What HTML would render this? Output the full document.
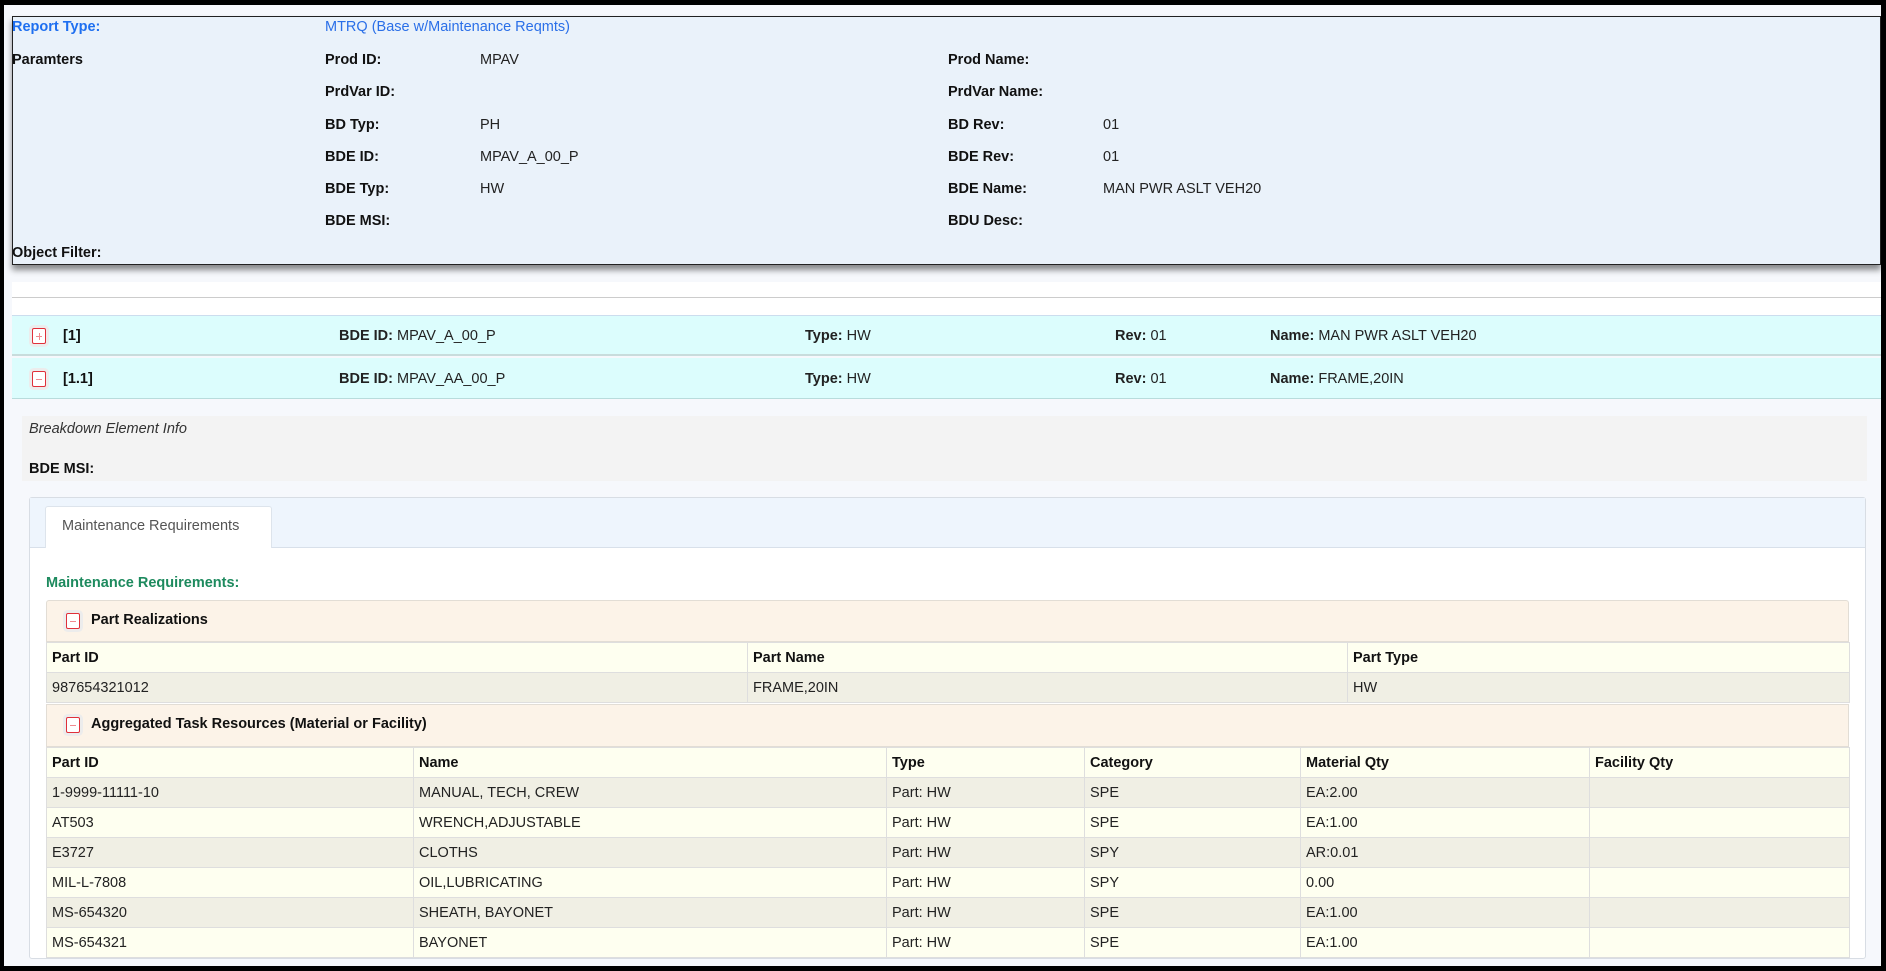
<!DOCTYPE html>
<html><head><meta charset="utf-8"><style>
*{box-sizing:border-box;margin:0;padding:0}
body{width:1886px;height:971px;background:#000;position:relative;overflow:hidden;font-family:"Liberation Sans",sans-serif;font-size:14.5px;color:#222}
.a{position:absolute;white-space:nowrap}
.b{font-weight:bold;color:#111}
#page{position:absolute;left:4px;top:5px;width:1877px;height:961px;background:#f6f8fc}
.ic{position:absolute;width:14px;height:16px;border:1px solid #e0303a;border-radius:2px;background:#fff;box-shadow:0 0 0 3px #ececec}
.ic:after{content:"";position:absolute;left:3px;top:7px;width:6px;height:1px;background:#f08a8f}
.ic.p:before{content:"";position:absolute;left:6px;top:4px;width:1px;height:7px;background:#f08a8f}
table{border-collapse:collapse;position:absolute;table-layout:fixed}
td,th{border:1px solid #dedede;height:30px;padding:0 5px;text-align:left;font-size:14.5px;white-space:nowrap}
th{background:#fefff0;font-weight:bold;color:#111}
tr.o td{background:#f0efe4}
tr.e td{background:#fefff0}
</style></head><body>
<div id="page"></div>
<div class="a" style="left:12px;top:16px;width:1869px;height:249px;background:#eaf2fa;border:1px solid #222;box-shadow:0 5px 6px rgba(0,0,0,.45)"></div>
<div class="a" style="left:12px;top:19px;font-weight:bold;color:#1e6ff0">Report Type:</div>
<div class="a" style="left:325px;top:19px;color:#2a6fe8">MTRQ (Base w/Maintenance Reqmts)</div>
<div class="a b" style="left:12px;top:52px">Paramters</div>
<div class="a b" style="left:325px;top:52px">Prod ID:</div><div class="a" style="left:480px;top:52px">MPAV</div>
<div class="a b" style="left:948px;top:52px">Prod Name:</div>
<div class="a b" style="left:325px;top:84px">PrdVar ID:</div>
<div class="a b" style="left:948px;top:84px">PrdVar Name:</div>
<div class="a b" style="left:325px;top:117px">BD Typ:</div><div class="a" style="left:480px;top:117px">PH</div>
<div class="a b" style="left:948px;top:117px">BD Rev:</div><div class="a" style="left:1103px;top:117px">01</div>
<div class="a b" style="left:325px;top:149px">BDE ID:</div><div class="a" style="left:480px;top:149px">MPAV_A_00_P</div>
<div class="a b" style="left:948px;top:149px">BDE Rev:</div><div class="a" style="left:1103px;top:149px">01</div>
<div class="a b" style="left:325px;top:181px">BDE Typ:</div><div class="a" style="left:480px;top:181px">HW</div>
<div class="a b" style="left:948px;top:181px">BDE Name:</div><div class="a" style="left:1103px;top:181px">MAN PWR ASLT VEH20</div>
<div class="a b" style="left:325px;top:213px">BDE MSI:</div>
<div class="a b" style="left:948px;top:213px">BDU Desc:</div>
<div class="a b" style="left:12px;top:245px">Object Filter:</div>
<div class="a" style="left:12px;top:282px;width:1869px;height:16px;background:#fff"></div>
<div class="a" style="left:12px;top:297px;width:1869px;height:1px;background:#ccc"></div>
<div class="a" style="left:12px;top:298px;width:1869px;height:17px;background:#fff"></div>
<div class="a" style="left:12px;top:315px;width:1869px;height:41px;background:#dcfdfd;border-top:1px solid #cde;border-bottom:2px solid #c8dcdc"></div>
<div class="a" style="left:12px;top:358px;width:1869px;height:41px;background:#dcfdfd;border-bottom:1px solid #b8dcdc"></div>
<span class="ic p" style="left:32px;top:328px"></span>
<div class="a b" style="left:63px;top:328px">[1]</div>
<div class="a" style="left:339px;top:328px"><b>BDE ID:</b> MPAV_A_00_P</div>
<div class="a" style="left:805px;top:328px"><b>Type:</b> HW</div>
<div class="a" style="left:1115px;top:328px"><b>Rev:</b> 01</div>
<div class="a" style="left:1270px;top:328px"><b>Name:</b> MAN PWR ASLT VEH20</div>
<span class="ic" style="left:32px;top:371px"></span>
<div class="a b" style="left:63px;top:371px">[1.1]</div>
<div class="a" style="left:339px;top:371px"><b>BDE ID:</b> MPAV_AA_00_P</div>
<div class="a" style="left:805px;top:371px"><b>Type:</b> HW</div>
<div class="a" style="left:1115px;top:371px"><b>Rev:</b> 01</div>
<div class="a" style="left:1270px;top:371px"><b>Name:</b> FRAME,20IN</div>
<div class="a" style="left:22px;top:416px;width:1845px;height:65px;background:#f3f3f3"></div>
<div class="a" style="left:29px;top:421px;font-style:italic;color:#333">Breakdown Element Info</div>
<div class="a b" style="left:29px;top:461px">BDE MSI:</div>
<div class="a" style="left:29px;top:497px;width:1837px;height:462px;background:#fff;border:1px solid #d8dde4;border-radius:3px"></div>
<div class="a" style="left:30px;top:498px;width:1835px;height:50px;background:#eef5fd;border-bottom:1px solid #d8e0ea"></div>
<div class="a" style="left:45px;top:506px;width:227px;height:42px;background:#fff;border:1px solid #dde4ec;border-bottom:none;border-radius:3px 3px 0 0"></div>
<div class="a" style="left:62px;top:518px;color:#555">Maintenance Requirements</div>
<div class="a" style="left:46px;top:575px;font-weight:bold;color:#1d8a5e">Maintenance Requirements:</div>
<div class="a" style="left:46px;top:600px;width:1803px;height:42px;background:#fcf3e8;border:1px solid #e2ddd5;border-radius:3px 3px 0 0"></div>
<span class="ic" style="left:66px;top:613px"></span>
<div class="a b" style="left:91px;top:612px">Part Realizations</div>
<table style="left:46px;top:642px;width:1803px">
<colgroup><col style="width:701px"><col style="width:600px"><col style="width:502px"></colgroup>
<tr><th>Part ID</th><th>Part Name</th><th>Part Type</th></tr>
<tr class="o"><td>987654321012</td><td>FRAME,20IN</td><td>HW</td></tr>
</table>
<div class="a" style="left:46px;top:704px;width:1803px;height:43px;background:#fcf3e8;border:1px solid #e2ddd5"></div>
<span class="ic" style="left:66px;top:717px"></span>
<div class="a b" style="left:91px;top:716px">Aggregated Task Resources (Material or Facility)</div>
<table style="left:46px;top:747px;width:1803px">
<colgroup><col style="width:367px"><col style="width:473px"><col style="width:198px"><col style="width:216px"><col style="width:289px"><col style="width:260px"></colgroup>
<tr><th>Part ID</th><th>Name</th><th>Type</th><th>Category</th><th>Material Qty</th><th>Facility Qty</th></tr>
<tr class="o"><td>1-9999-11111-10</td><td>MANUAL, TECH, CREW</td><td>Part: HW</td><td>SPE</td><td>EA:2.00</td><td></td></tr>
<tr class="e"><td>AT503</td><td>WRENCH,ADJUSTABLE</td><td>Part: HW</td><td>SPE</td><td>EA:1.00</td><td></td></tr>
<tr class="o"><td>E3727</td><td>CLOTHS</td><td>Part: HW</td><td>SPY</td><td>AR:0.01</td><td></td></tr>
<tr class="e"><td>MIL-L-7808</td><td>OIL,LUBRICATING</td><td>Part: HW</td><td>SPY</td><td>0.00</td><td></td></tr>
<tr class="o"><td>MS-654320</td><td>SHEATH, BAYONET</td><td>Part: HW</td><td>SPE</td><td>EA:1.00</td><td></td></tr>
<tr class="e"><td>MS-654321</td><td>BAYONET</td><td>Part: HW</td><td>SPE</td><td>EA:1.00</td><td></td></tr>
</table>
</body></html>
